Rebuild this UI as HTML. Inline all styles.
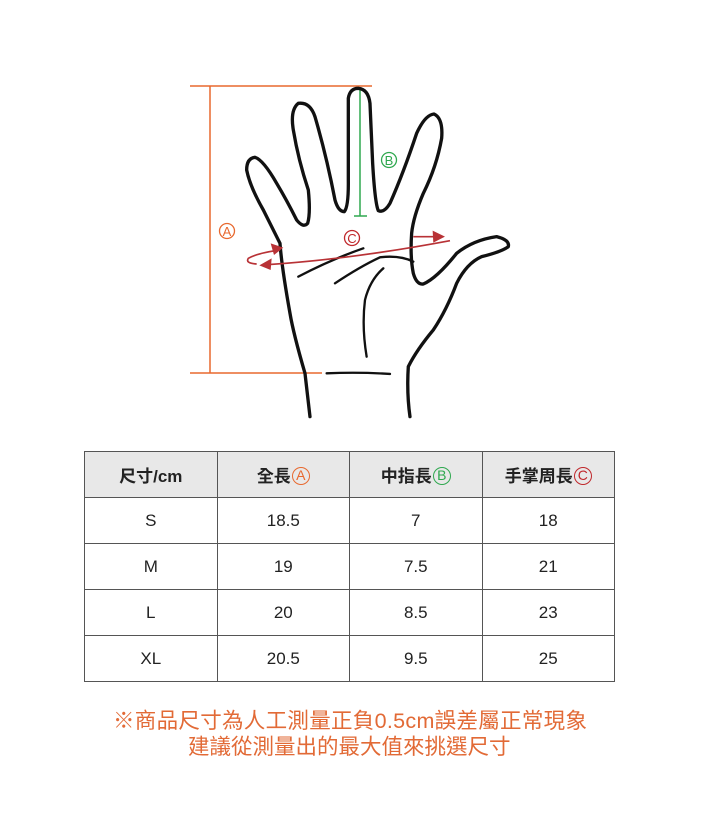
<!DOCTYPE html>
<html><head><meta charset="utf-8"><style>
body{margin:0;width:728px;height:814px;background:#fff;position:relative;overflow:hidden;font-family:"Liberation Sans","Noto Sans CJK TC",sans-serif}
svg.h{position:absolute;left:0;top:0}
table{position:absolute;left:84px;top:451px;border-collapse:collapse;width:531px}
td{border:1px solid #555;text-align:center;font-size:17px;color:#222;height:45px;padding:0;width:132px}
tr.hd td{background:#e8e8e8;font-weight:bold;height:45px}
.ci{display:inline-block;box-sizing:border-box;width:18px;height:18px;border:1.5px solid;border-radius:50%;font-size:14px;line-height:15px;text-align:center;vertical-align:middle;position:relative;top:-2px;font-weight:normal;margin-left:1px}
.a{color:#e8692f}.b{color:#2fa84f}.c{color:#c0282c}
.note{position:absolute;color:#e26a36;font-size:21.5px;line-height:26px;white-space:nowrap}
</style></head><body>
<svg class="h" width="728" height="440" viewBox="0 0 728 440">
<g stroke="#e8692f" stroke-width="1.5" fill="none">
<line x1="190" y1="86" x2="372" y2="86"/><line x1="190" y1="373" x2="322" y2="373"/><line x1="210" y1="86" x2="210" y2="373"/>
</g>
<g stroke="#2fa84f" stroke-width="1.5"><line x1="360" y1="88" x2="360" y2="216"/><line x1="354" y1="216" x2="367" y2="216"/></g>
<g transform="translate(180,80) scale(0.3333)" fill="none" stroke="#111" stroke-linecap="round" stroke-linejoin="round">
<path stroke-width="10" d="M390 1010 L375 880 Q340 760 330 700 Q305 560 300 490 Q280 450 250 390 Q210 320 200 270 Q200 235 225 232 Q250 240 290 310 Q320 360 350 420 Q370 445 383 430 Q392 400 385 330 Q355 240 340 150 Q330 90 355 70 Q390 65 405 110 Q440 230 465 360 Q475 395 493 395 Q506 380 505 300 L505 55 Q510 25 535 25 Q565 28 570 70 L578 250 Q585 370 595 392 Q612 400 630 370 Q670 280 710 160 Q735 105 762 102 Q790 115 785 175 Q770 260 730 340 Q700 410 695 460 Q690 530 700 580 Q710 615 730 612 Q770 595 830 520 Q880 480 950 470 Q990 480 985 500 Q965 515 905 530 Q860 550 830 610 Q800 690 760 750 Q710 810 685 860 Q680 940 690 1010"/>
<path stroke-width="7" d="M355 590 Q450 540 550 505 M465 610 Q540 560 600 532 Q660 525 700 545 M560 830 Q545 740 555 660 Q570 600 610 565 M440 880 Q540 876 630 882"/>
</g>
<g transform="translate(180,80) scale(0.3333)" fill="none" stroke="#b83236" stroke-width="5">
<path d="M300 510 Q230 520 205 535 Q195 550 230 552 M245 555 Q500 540 810 482 M700 470 L780 470"/>
<path fill="#b83236" stroke="none" d="M310 503 L272 490 L282 525 Z M238 556 L275 535 L272 570 Z M795 470 L758 452 L760 488 Z"/>
</g>
<g font-family="Liberation Sans,sans-serif" font-size="13" text-anchor="middle" fill="none" stroke-width="1.3">
<circle cx="227" cy="231" r="7.5" stroke="#e8692f"/><text x="227" y="236" fill="#e8692f" stroke="none">A</text>
<circle cx="389" cy="160" r="7.5" stroke="#2fa84f"/><text x="389" y="165" fill="#2fa84f" stroke="none">B</text>
<circle cx="352" cy="238" r="7.5" stroke="#c0282c"/><text x="352" y="243" fill="#c0282c" stroke="none">C</text>
</g>
</svg>
<table>
<tr class="hd"><td>尺寸/cm</td><td>全長<span class="ci a">A</span></td><td>中指長<span class="ci b">B</span></td><td>手掌周長<span class="ci c">C</span></td></tr>
<tr><td>S</td><td>18.5</td><td>7</td><td>18</td></tr>
<tr><td>M</td><td>19</td><td>7.5</td><td>21</td></tr>
<tr><td>L</td><td>20</td><td>8.5</td><td>23</td></tr>
<tr><td>XL</td><td>20.5</td><td>9.5</td><td>25</td></tr>
</table>
<div class="note" style="top:708px;left:113px;letter-spacing:0.3px">※商品尺寸為人工測量正負0.5cm誤差屬正常現象</div>
<div class="note" style="top:734px;left:188px">建議從測量出的最大值來挑選尺寸</div>
</body></html>
